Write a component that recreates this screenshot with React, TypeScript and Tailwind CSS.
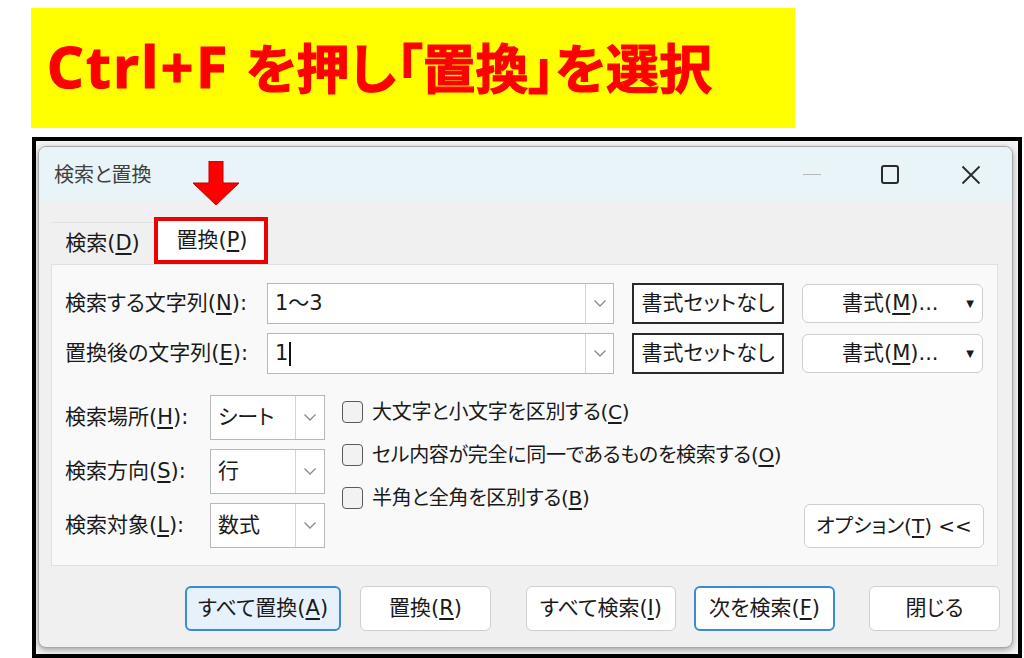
import React from "react";

const U = ({ c }: { c: string }) => (
  <span className="underline underline-offset-[3px] decoration-[1.5px]">{c}</span>
);

const Chevron = () => (
  <svg width="14" height="9" viewBox="0 0 14 9" fill="none">
    <path d="M1.5 1.5 L7 7 L12.5 1.5" stroke="#8a8a8a" strokeWidth="1.3" />
  </svg>
);

function ComboInput({ children }: { children?: React.ReactNode }) {
  return (
    <div className="flex h-[41px] w-[347px] border-[1.5px] border-[#b8b8b8] bg-white">
      <div className="flex flex-1 items-center pl-[7px] text-[#1a1a1a]">{children}</div>
      <div className="flex w-[28px] items-center justify-center border-l border-[#d4d4d4]">
        <Chevron />
      </div>
    </div>
  );
}

function Select({ value }: { value: string }) {
  return (
    <div className="flex h-[45px] w-[115px] border-[1.5px] border-[#b8b8b8] bg-white">
      <div className="flex flex-1 items-center pl-[7px] text-[#1a1a1a]">{value}</div>
      <div className="flex w-[29px] items-center justify-center border-l border-[#d4d4d4]">
        <Chevron />
      </div>
    </div>
  );
}

function CheckRow({ children }: { children: React.ReactNode }) {
  return (
    <div className="flex h-[43px] items-center whitespace-nowrap">
      <div className="h-[22px] w-[21px] shrink-0 rounded-[4px] border-[1.5px] border-[#5a5a5a] bg-[#f2f2f2]" />
      <div className="ml-[9px] text-[20px] tracking-[-0.3px] text-[#1a1a1a]">{children}</div>
    </div>
  );
}

export default function App() {
  return (
    <div className="h-[658px] w-[1024px] overflow-hidden bg-white pt-[8px] font-['DejaVu_Sans','Noto_Sans_CJK_JP',sans-serif] [font-feature-settings:'palt']">
      {/* Banner */}
      <div className="ml-[31px] flex h-[120px] w-[764px] items-center bg-[#ffff00] pl-[16px] pb-[4px] font-bold leading-none text-[#ff0000] [-webkit-text-stroke:1.2px_#ff0000]">
        <span className="font-['Noto_Sans',sans-serif] text-[57px] tracking-[2.5px]">Ctrl+F</span>
        <span className="ml-[16px] font-['Noto_Sans_CJK_JP',sans-serif] text-[53px] [font-feature-settings:'palt']">
          を押し「置換」を選択
        </span>
      </div>

      {/* Frame */}
      <div className="ml-[32px] mt-[9px] h-[521px] w-[990px] border-[4px] border-black bg-[#f4f4f4] pl-[2px] pt-[5px]">
        <div className="relative h-[502px] w-[975px] overflow-hidden rounded-[8px] border border-[#a8a8a8] bg-[#f0f0f0] text-[21px] shadow-[0_2px_6px_rgba(0,0,0,0.35)]">
          {/* Title bar */}
          <div className="relative flex h-[55px] items-center bg-[#e8f4f7] pl-[15px]">
            <span className="text-[20px] text-[#404040]">検索と置換</span>
            <div className="ml-auto flex items-center">
              <div className="mr-[60px] h-[1px] w-[18px] bg-[#b8b8b8]" />
              <div className="mr-[62px] h-[19px] w-[18px] rounded-[3px] border-[2px] border-[#2a2a2a]" />
              <svg className="mr-[31px]" width="20" height="20" viewBox="0 0 20 20">
                <path d="M1.5 1.5 L18.5 18.5 M18.5 1.5 L1.5 18.5" stroke="#2a2a2a" strokeWidth="1.8" />
              </svg>
            </div>
            {/* red arrow */}
            <svg className="absolute left-[154px] top-[14px]" width="46" height="44" viewBox="0 0 46 44">
              <path d="M16 0 H30 V22 H46 L23 44 L0 22 H16 Z" fill="#ff0000" />
              <path d="M16 0 H30 V22 H46 L23 44 L0 22 H16 Z" fill="none" stroke="#c00000" strokeWidth="1" />
            </svg>
          </div>

          {/* Body */}
          <div className="px-[12px] pt-[15px]">
            {/* Tabs */}
            <div className="flex h-[47px] items-end">
              <div className="flex h-[42px] w-[103px] items-center justify-center border-t border-[#e2e2e2] bg-[#f0f0f0] text-[#1a1a1a]">
                検索(<U c="D" />)
              </div>
              <div className="flex h-[47px] w-[114px] items-center justify-center border-[4px] border-[#ee0000] bg-white pl-[2px] text-[#1a1a1a]">
                置換(<U c="P" />)
              </div>
            </div>

            {/* Panel */}
            <div className="h-[302px] w-[947px] border border-[#e0e0e0] bg-[#f9f9f9] pl-[13px] pt-[18px]">
              <div className="flex items-center">
                <div className="w-[202px] text-[#1a1a1a]">
                  検索する文字列(<U c="N" />):
                </div>
                <ComboInput>1〜3</ComboInput>
                <div className="ml-[18px] flex h-[41px] w-[152px] items-center justify-center border-[2px] border-[#2a2a2a] bg-white text-[#1a1a1a]">
                  書式セットなし
                </div>
                <div className="ml-[18px] flex h-[39px] w-[181px] items-center rounded-[6px] border border-[#cfcfcf] bg-white pl-[39px] text-[#1a1a1a]">
                  書式(<U c="M" />)...
                  <span className="ml-auto mr-[8px] text-[10px]">▼</span>
                </div>
              </div>
              <div className="mt-[9px] flex items-center">
                <div className="w-[202px] text-[#1a1a1a]">
                  置換後の文字列(<U c="E" />):
                </div>
                <ComboInput>
                  1<span className="ml-[1px] inline-block h-[24px] w-[2px] bg-[#111]" />
                </ComboInput>
                <div className="ml-[18px] flex h-[41px] w-[152px] items-center justify-center border-[2px] border-[#2a2a2a] bg-white text-[#1a1a1a]">
                  書式セットなし
                </div>
                <div className="ml-[18px] flex h-[39px] w-[181px] items-center rounded-[6px] border border-[#cfcfcf] bg-white pl-[39px] text-[#1a1a1a]">
                  書式(<U c="M" />)...
                  <span className="ml-auto mr-[8px] text-[10px]">▼</span>
                </div>
              </div>

              <div className="mt-[21px] flex">
                <div className="flex shrink-0 flex-col gap-[9px]">
                  {[
                    ["検索場所(", "H", "):", "シート"],
                    ["検索方向(", "S", "):", "行"],
                    ["検索対象(", "L", "):", "数式"],
                  ].map(([a, b, c, v]) => (
                    <div key={b} className="flex items-center">
                      <div className="w-[145px] whitespace-nowrap text-[#1a1a1a]">
                        {a}
                        <U c={b} />
                        {c}
                      </div>
                      <Select value={v} />
                    </div>
                  ))}
                </div>
                <div className="-mt-[5px] ml-[17px] flex w-[440px] shrink-0 flex-col">
                  <CheckRow>
                    大文字と小文字を区別する(<U c="C" />)
                  </CheckRow>
                  <CheckRow>
                    セル内容が完全に同一であるものを検索する(<U c="O" />)
                  </CheckRow>
                  <CheckRow>
                    半角と全角を区別する(<U c="B" />)
                  </CheckRow>
                </div>
                <div className="ml-auto mr-[13px] flex shrink-0 flex-col justify-end">
                  <div className="flex h-[44px] w-[180px] items-center justify-center whitespace-nowrap rounded-[6px] border border-[#cfcfcf] bg-white text-[20px] text-[#1a1a1a]">
                    オプション(<U c="T" />) &lt;&lt;
                  </div>
                </div>
              </div>
            </div>

            {/* Bottom buttons */}
            <div className="mt-[20px] flex text-[#1a1a1a]">
              <div className="ml-[134px] flex h-[45px] w-[156px] items-center justify-center rounded-[6px] border-[2px] border-[#3b8ad8] bg-[#e6f1fb]">
                すべて置換(<U c="A" />)
              </div>
              <div className="ml-[19px] flex h-[45px] w-[131px] items-center justify-center rounded-[6px] border border-[#cfcfcf] bg-white">
                置換(<U c="R" />)
              </div>
              <div className="ml-[35px] flex h-[45px] w-[150px] items-center justify-center rounded-[6px] border border-[#cfcfcf] bg-white">
                すべて検索(<U c="I" />)
              </div>
              <div className="ml-[18px] flex h-[45px] w-[141px] items-center justify-center rounded-[6px] border-[2px] border-[#3b8ad8] bg-white">
                次を検索(<U c="F" />)
              </div>
              <div className="ml-[34px] flex h-[45px] w-[131px] items-center justify-center rounded-[6px] border border-[#cfcfcf] bg-white">
                閉じる
              </div>
            </div>
          </div>
        </div>
      </div>
    </div>
  );
}
